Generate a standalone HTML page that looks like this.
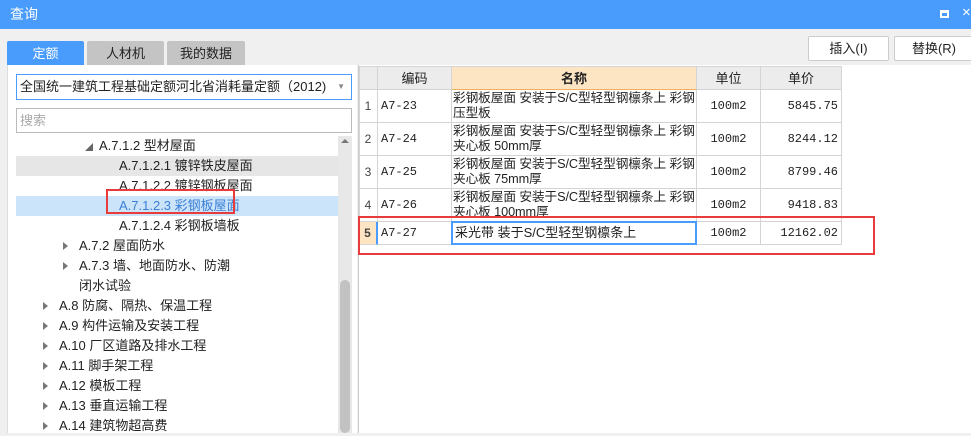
<!DOCTYPE html>
<html><head><meta charset="utf-8"><style>
*{margin:0;padding:0;box-sizing:border-box}
body{width:971px;height:433px;overflow:hidden;background:#f0f0f0;font-family:"Liberation Sans","Microsoft YaHei","Noto Sans CJK SC",sans-serif;font-size:13px;color:#222;position:relative}
.a{position:absolute}
.title{left:0;top:0;width:971px;height:29px;background:#4a9cfc;color:#fff;font-size:14px;line-height:29px;padding-left:10px}
.tab{top:41px;height:25px;text-align:center;line-height:25px;font-size:13px;border-radius:2px 2px 0 0}
.panel{left:7px;top:65px;width:350px;height:368px;background:#fff;border-left:1px solid #ddd}
.row{position:absolute;height:20px;line-height:20px;font-size:13px;white-space:nowrap}
.tri{position:absolute;width:0;height:0;border-top:4px solid transparent;border-bottom:4px solid transparent;border-left:5px solid #777;top:6px}
.btn{top:36px;height:25px;background:#fff;border:1px solid #ccc;border-radius:2px;text-align:center;line-height:23px;font-size:13px}
.c{position:absolute;border-right:1px solid #d4d4d4;border-bottom:1px solid #d4d4d4;overflow:hidden;white-space:nowrap;font-family:"Liberation Mono","Noto Sans CJK SC",monospace;font-size:12px}
.h{background:#ececec;text-align:center;line-height:23px;font-family:"Liberation Sans","Noto Sans CJK SC",sans-serif;font-size:13px}
.nm{font-family:"Liberation Sans","Noto Sans CJK SC",sans-serif;font-size:12.7px;line-height:15px;padding:1px 0 0 1px;letter-spacing:-0.1px}
.idx{text-align:center;font-family:"Liberation Sans",sans-serif;color:#444}
</style></head><body>
<div class="a title">查询</div>
<div class="a" style="left:940px;top:10px;width:9px;height:8px;border:2px solid #fff;border-top-width:3px"></div>
<div class="a" style="left:962px;top:4px;color:#fff;font-size:15px">×</div>
<div class="a tab" style="left:7px;width:77px;background:#4a9cfc;color:#fff">定额</div>
<div class="a tab" style="left:87px;width:77px;background:#c4c4c4">人材机</div>
<div class="a tab" style="left:167px;width:78px;background:#c4c4c4">我的数据</div>
<div class="a panel"></div>
<div class="a" style="left:16px;top:74px;width:336px;height:26px;border:1px solid #4a9cfc;background:#fff;line-height:24px;padding-left:3px;font-size:13px">全国统一建筑工程基础定额河北省消耗量定额（2012)<span style="position:absolute;right:6px;top:0;color:#888;font-size:8px">▼</span></div>
<div class="a" style="left:16px;top:108px;width:336px;height:25px;border:1px solid #bbb;background:#fff;line-height:23px;padding-left:3px;color:#aaa">搜索</div>
<div class="a" style="left:338px;top:136px;width:14px;height:297px;background:#e8e8e8"></div>
<div class="a" style="left:341px;top:139px;width:0;height:0;border-left:4px solid transparent;border-right:4px solid transparent;border-bottom:4px solid #777"></div>
<div class="a" style="left:340px;top:280px;width:10px;height:153px;background:#c2c2c2;border-radius:5px"></div>
<div class="a" style="left:16px;top:156px;width:322px;height:20px;background:#e6e6e6"></div>
<div class="a" style="left:16px;top:196px;width:322px;height:20px;background:#cce4fa"></div>
<div class="row" style="left:99px;top:136px"><span style="position:absolute;left:-14px;top:2px;font-size:8px;color:#666">◢</span>A.7.1.2 型材屋面</div>
<div class="row" style="left:119px;top:156px">A.7.1.2.1 镀锌铁皮屋面</div>
<div class="row" style="left:119px;top:176px">A.7.1.2.2 镀锌钢板屋面</div>
<div class="row" style="left:119px;top:196px;color:#3a7fd6">A.7.1.2.3 彩钢板屋面</div>
<div class="row" style="left:119px;top:216px">A.7.1.2.4 彩钢板墙板</div>
<div class="row" style="left:79px;top:236px"><i class="tri" style="left:-16px"></i>A.7.2 屋面防水</div>
<div class="row" style="left:79px;top:256px"><i class="tri" style="left:-16px"></i>A.7.3 墙、地面防水、防潮</div>
<div class="row" style="left:79px;top:276px">闭水试验</div>
<div class="row" style="left:59px;top:296px"><i class="tri" style="left:-16px"></i>A.8 防腐、隔热、保温工程</div>
<div class="row" style="left:59px;top:316px"><i class="tri" style="left:-16px"></i>A.9 构件运输及安装工程</div>
<div class="row" style="left:59px;top:336px"><i class="tri" style="left:-16px"></i>A.10 厂区道路及排水工程</div>
<div class="row" style="left:59px;top:356px"><i class="tri" style="left:-16px"></i>A.11 脚手架工程</div>
<div class="row" style="left:59px;top:376px"><i class="tri" style="left:-16px"></i>A.12 模板工程</div>
<div class="row" style="left:59px;top:396px"><i class="tri" style="left:-16px"></i>A.13 垂直运输工程</div>
<div class="row" style="left:59px;top:416px"><i class="tri" style="left:-16px"></i>A.14 建筑物超高费</div>
<div class="a" style="left:106px;top:189px;width:129px;height:25px;border:2px solid #e83b3b"></div>
<div class="a" style="left:358px;top:65px;width:613px;height:368px;background:#fff;border-left:1px solid #ccc"></div>
<div class="a btn" style="left:808px;width:81px">插入(I)</div>
<div class="a btn" style="left:894px;width:80px">替换(R)</div>

<div class="a" style="left:359px;top:66px;width:483px;height:1px;background:#d4d4d4"></div>
<div class="c h" style="left:359px;top:67px;width:19px;height:23px"></div>
<div class="c h" style="left:378px;top:67px;width:74px;height:23px">编码</div>
<div class="c h" style="left:452px;top:67px;width:245px;height:23px;background:#fde5c4;font-weight:bold;border-bottom:1px solid #f0b060">名称</div>
<div class="c h" style="left:697px;top:67px;width:64px;height:23px">单位</div>
<div class="c h" style="left:761px;top:67px;width:81px;height:23px">单价</div>

<div class="c idx" style="left:359px;top:90px;width:19px;height:33px;line-height:32px">1</div>
<div class="c" style="left:378px;top:90px;width:74px;height:33px;line-height:32px;padding-left:3px">A7-23</div>
<div class="c nm" style="left:452px;top:90px;width:245px;height:33px">彩钢板屋面 安装于S/C型轻型钢檩条上 彩钢<br>压型板</div>
<div class="c" style="left:697px;top:90px;width:64px;height:33px;line-height:32px;text-align:center">100m2</div>
<div class="c" style="left:761px;top:90px;width:81px;height:33px;line-height:32px;text-align:right;padding-right:3px">5845.75</div>

<div class="c idx" style="left:359px;top:123px;width:19px;height:33px;line-height:32px">2</div>
<div class="c" style="left:378px;top:123px;width:74px;height:33px;line-height:32px;padding-left:3px">A7-24</div>
<div class="c nm" style="left:452px;top:123px;width:245px;height:33px">彩钢板屋面 安装于S/C型轻型钢檩条上 彩钢<br>夹心板 50mm厚</div>
<div class="c" style="left:697px;top:123px;width:64px;height:33px;line-height:32px;text-align:center">100m2</div>
<div class="c" style="left:761px;top:123px;width:81px;height:33px;line-height:32px;text-align:right;padding-right:3px">8244.12</div>

<div class="c idx" style="left:359px;top:156px;width:19px;height:33px;line-height:32px">3</div>
<div class="c" style="left:378px;top:156px;width:74px;height:33px;line-height:32px;padding-left:3px">A7-25</div>
<div class="c nm" style="left:452px;top:156px;width:245px;height:33px">彩钢板屋面 安装于S/C型轻型钢檩条上 彩钢<br>夹心板 75mm厚</div>
<div class="c" style="left:697px;top:156px;width:64px;height:33px;line-height:32px;text-align:center">100m2</div>
<div class="c" style="left:761px;top:156px;width:81px;height:33px;line-height:32px;text-align:right;padding-right:3px">8799.46</div>

<div class="c idx" style="left:359px;top:189px;width:19px;height:33px;line-height:32px">4</div>
<div class="c" style="left:378px;top:189px;width:74px;height:33px;line-height:32px;padding-left:3px">A7-26</div>
<div class="c nm" style="left:452px;top:189px;width:245px;height:33px">彩钢板屋面 安装于S/C型轻型钢檩条上 彩钢<br>夹心板 100mm厚</div>
<div class="c" style="left:697px;top:189px;width:64px;height:33px;line-height:32px;text-align:center">100m2</div>
<div class="c" style="left:761px;top:189px;width:81px;height:33px;line-height:32px;text-align:right;padding-right:3px">9418.83</div>

<div class="c idx" style="left:359px;top:222px;width:19px;height:23px;line-height:22px;background:#fde5c4;font-weight:bold;border-right:2px solid #4a9cfc">5</div>
<div class="c" style="left:378px;top:222px;width:74px;height:23px;line-height:22px;padding-left:3px">A7-27</div>
<div class="c" style="left:451px;top:221px;width:246px;height:24px;border:2px solid #4a9cfc;line-height:20px;padding-left:2px;font-family:'Liberation Sans','Noto Sans CJK SC',sans-serif;font-size:13px">采光带 装于S/C型轻型钢檩条上</div>
<div class="c" style="left:697px;top:222px;width:64px;height:23px;line-height:22px;text-align:center">100m2</div>
<div class="c" style="left:761px;top:222px;width:81px;height:23px;line-height:22px;text-align:right;padding-right:3px">12162.02</div>
<div class="a" style="left:359px;top:67px;width:1px;height:178px;background:#d4d4d4"></div>

<div class="a" style="left:358px;top:216px;width:517px;height:39px;border:2px solid #e83b3b"></div>
</body></html>
